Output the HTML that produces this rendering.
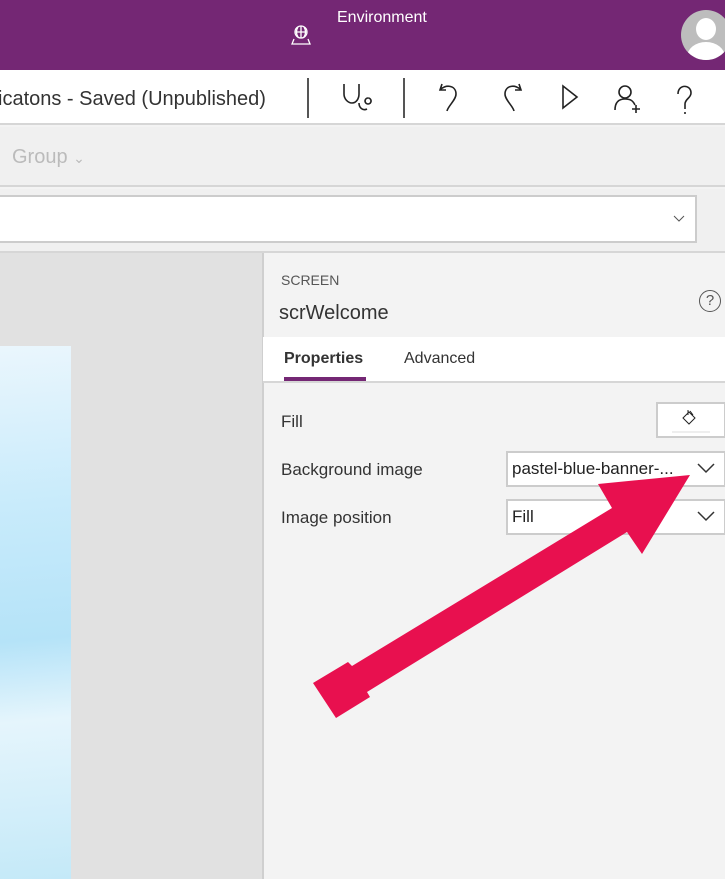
<!DOCTYPE html>
<html><head><meta charset="utf-8"><style>
*{margin:0;padding:0;box-sizing:border-box}
body{width:725px;height:879px;overflow:hidden;background:#f3f3f3;font-family:"Liberation Sans",sans-serif;position:relative}
.a{position:absolute}
</style></head><body>
<div class="a" style="left:0;top:0;width:725px;height:70px;background:#742774"></div>
<div class="a" style="left:337px;top:9px;color:#fff;font-size:16px">Environment</div>
<svg class="a" style="left:289px;top:23px" width="24" height="24" viewBox="0 0 24 24" fill="none" stroke="#fff" stroke-width="1.3"><circle cx="12" cy="9" r="6"/><path d="M6 9h12M12 3v12M9 4c-2 3-2 7 0 10M15 4c2 3 2 7 0 10M5 16l-2 5h18l-2-5"/></svg>
<div class="a" style="left:681px;top:10px;width:50px;height:50px;border-radius:50%;background:#bdbdbd;overflow:hidden"><div class="a" style="left:15px;top:8px;width:20px;height:22px;border-radius:50%;background:#fff"></div><div class="a" style="left:6px;top:32px;width:38px;height:30px;border-radius:50%;background:#fff"></div></div>
<div class="a" style="left:0;top:70px;width:725px;height:55px;background:#fff;border-bottom:2px solid #d6d6d6"></div>
<div class="a" style="left:-2px;top:88px;font-size:20px;color:#333">icatons - Saved (Unpublished)</div>
<div class="a" style="left:307px;top:78px;width:2px;height:40px;background:#555"></div>
<div class="a" style="left:403px;top:78px;width:2px;height:40px;background:#555"></div>
<svg class="a" style="left:335px;top:80px" width="40" height="36" viewBox="0 0 40 36" fill="none" stroke="#222" stroke-width="1.6"><path d="M9 4v10c0 5 4 9 8 9s7-4 7-9V4M24 23c0 5 4 8 8 6M33 18a3 3 0 1 0 0.1 0"/></svg>
<svg class="a" style="left:435px;top:80px" width="260" height="36" viewBox="0 0 260 36" fill="none" stroke="#222" stroke-width="1.6"><path d="M7 4l-2 6 6 0M5 10c5-6 16-5 16 4 0 6-8 12-9 17"/><path d="M84 4l2 6-6 0M86 10c-5-6-16-5-16 4 0 6 8 12 9 17"/><path d="M128 6v22l14-11z"/><circle cx="190" cy="12" r="6"/><path d="M180 30c0-8 4-11 10-11s8 2 10 6M201 25v8M197 29h8"/><path d="M243 14c0-10 13-10 13-1 0 5-6 6-6 11v5M250 32v2"/></svg>
<div class="a" style="left:0;top:127px;width:725px;height:60px;background:#f0f0f0;border-bottom:2px solid #d6d6d6"></div>
<div class="a" style="left:12px;top:146px;font-size:20px;color:#bbb">Group <span style="font-size:14px">&#8964;</span></div>
<div class="a" style="left:0;top:189px;width:725px;height:62px;background:#f0f0f0"></div>
<div class="a" style="left:-2px;top:195px;width:699px;height:48px;background:#fff;border:2px solid #ccc"></div>
<svg class="a" style="left:672px;top:213px" width="14" height="10"><path d="M2 3l5 5 5-5" fill="none" stroke="#555" stroke-width="1"/></svg>
<div class="a" style="left:0;top:251px;width:725px;height:2px;background:#d6d6d6"></div>
<div class="a" style="left:0;top:253px;width:262px;height:626px;background:#e1e1e1"></div>
<div class="a" style="left:0;top:346px;width:71px;height:533px;background:linear-gradient(175deg,#eaf6fd 0%,#c8ebfb 30%,#b5e3f8 55%,#e5f5fc 70%,#c4e9f8 100%)"></div>
<div class="a" style="left:262px;top:253px;width:2px;height:626px;background:#cfcfcf"></div>
<div class="a" style="left:281px;top:272px;font-size:14px;color:#555">SCREEN</div>
<div class="a" style="left:279px;top:302px;font-size:20px;color:#333">scrWelcome</div>
<div class="a" style="left:699px;top:290px;width:22px;height:22px;border:1.3px solid #555;border-radius:50%;font-size:15px;color:#555;text-align:center;line-height:20px">?</div>
<div class="a" style="left:263px;top:337px;width:462px;height:45px;background:#fff"></div>
<div class="a" style="left:284px;top:350px;font-size:16px;font-weight:bold;color:#333">Properties</div>
<div class="a" style="left:404px;top:350px;font-size:16px;color:#333">Advanced</div>
<div class="a" style="left:284px;top:377px;width:82px;height:4px;background:#742774"></div>
<div class="a" style="left:263px;top:381px;width:462px;height:2px;background:#d6d6d6"></div>
<div class="a" style="left:281px;top:412px;font-size:17px;color:#333">Fill</div>
<div class="a" style="left:281px;top:460px;font-size:17px;color:#333">Background image</div>
<div class="a" style="left:281px;top:508px;font-size:17px;color:#333">Image position</div>
<div class="a" style="left:656px;top:402px;width:70px;height:36px;background:#fff;border:2px solid #ccc"></div>
<svg class="a" style="left:681px;top:408px" width="18" height="18" fill="none" stroke="#222" stroke-width="1"><path d="M2 10l6-6 6 6-6 6zM7 2v5M9 3l3 4"/></svg>
<div class="a" style="left:672px;top:431px;width:38px;height:2px;background:#eee"></div>
<div class="a" style="left:506px;top:451px;width:220px;height:36px;background:#fff;border:2px solid #ccc"></div>
<div class="a" style="left:512px;top:459px;font-size:17px;color:#222">pastel-blue-banner-...</div>
<div class="a" style="left:506px;top:499px;width:220px;height:36px;background:#fff;border:2px solid #ccc"></div>
<div class="a" style="left:512px;top:507px;font-size:17px;color:#222">Fill</div>
<svg class="a" style="left:696px;top:460px" width="20" height="70" fill="none" stroke="#333" stroke-width="1.5"><path d="M2 4l8 8 8-8M2 52l8 8 8-8"/></svg>
<svg class="a" style="left:0;top:0" width="725" height="879"><polygon points="690,475 598,484 612,508 352,666 348,662 313,683 336,718 370,697 367,692 627,532 642,554" fill="#e8104f"/></svg>
</body></html>
